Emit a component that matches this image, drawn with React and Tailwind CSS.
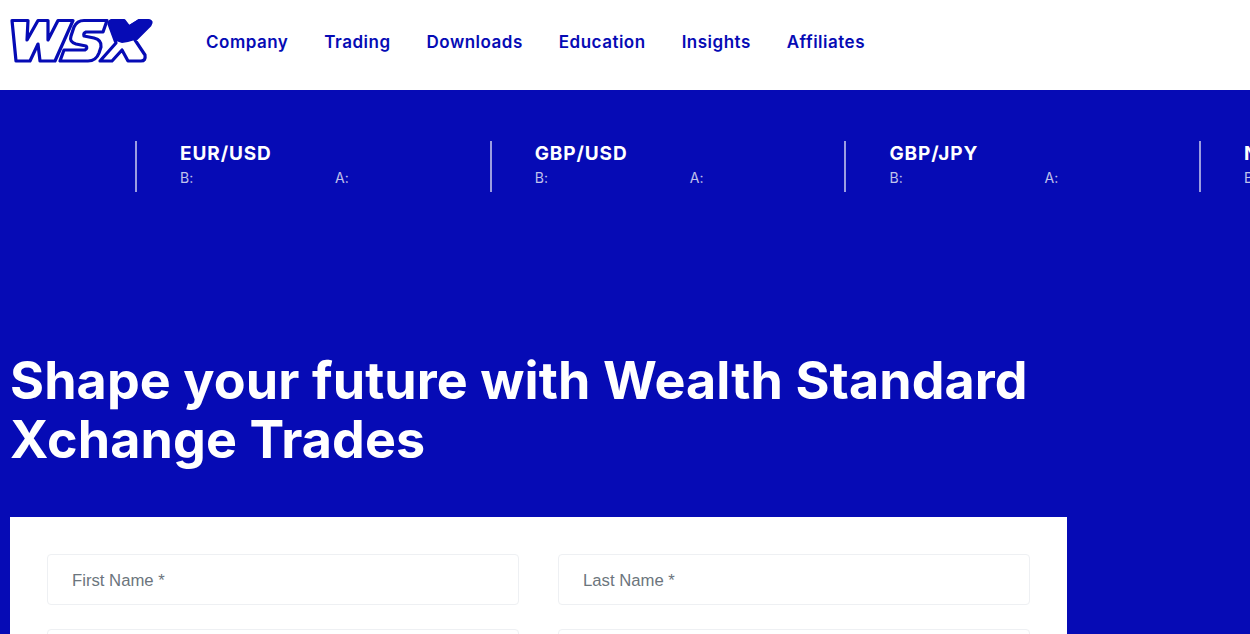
const NAV = ["Company", "Trading", "Downloads", "Education", "Insights", "Affiliates"];
const PAIRS = ["EUR/USD", "GBP/USD", "GBP/JPY", "NZD/USD"];

function Logo() {
  return (
    <svg width="146" height="48" viewBox="9 17 146 48" fill="none" className="shrink-0 -mt-[4px]">
      <g stroke="#060bb5" strokeWidth="3.2" strokeLinejoin="round" fill="#fff">
        <path d="M12 20.5 L28 20.5 L27 40 L38 20.5 L48 20.5 L48 40 L58 20.5 L73 20.5 L55 61 L40 61 L38 44 L30 61 L16 61 Z" />
        <path d="M107 20.5 L84 20.5 Q77 20.5 74 27 L71 36 Q69 42 76 44 L86 46 Q88 48 85 50 L64 50 L60 61 L88 61 Q96 61 99 53 L101 47 Q102 40 94 38 L84 36 Q83 33 86 32 L103 32 Z" />
        <path d="M112 20.5 L124 20.5 L129 27 L139 20.5 L148 20.5 Q153 21 150 25 L135 40 L145 55 Q146 61 141 61 L128 61 L122 50 L112 61 L100 61 L116 43 L109 24 Q109 21 112 20.5 Z" />
      </g>
      <path d="M112 19 L124 19 L129 25 L139 19 L148 19 Q154 20 151 25 L135 40 L128 42 L122 43 L116 41 L109 24 Q108 20 112 19 Z" fill="#060bb5" />
    </svg>
  );
}

function Quote({ pair }) {
  return (
    <div className="w-[354.7px] shrink-0 h-[51px] border-l-2 border-white/60 pl-[43px]">
      <div className="text-[19px] leading-[24px] font-bold tracking-[0.9px] text-white mt-[1px]">{pair}</div>
      <div className="flex text-[14px] leading-[18px] tracking-[0.2px] text-white/75 mt-[3px]">
        <span className="w-[155px]">B:</span>
        <span>A:</span>
      </div>
    </div>
  );
}

function Field({ label }) {
  return (
    <div className="h-[51px] border border-[#eef0f3] rounded-[4px] pl-[24px] pt-[2px] flex items-center text-[16.7px] text-[#6c757d] font-['Liberation_Sans',sans-serif]">
      {label}
    </div>
  );
}

export default function App() {
  return (
    <div className="h-[634px] overflow-hidden bg-[#060bb5] font-['Inter',sans-serif]">
      <header className="h-[90px] bg-white flex items-center pl-[9px] pb-[4px]">
        <Logo />
        <nav className="flex gap-[36px] ml-[51px] text-[17px] font-semibold tracking-[0.5px] text-[#060bb5]">
          {NAV.map((n) => (
            <span key={n}>{n}</span>
          ))}
        </nav>
      </header>

      <div className="flex overflow-hidden pl-[135px] pt-[51px]">
        {PAIRS.map((p) => (
          <Quote key={p} pair={p} />
        ))}
      </div>

      <h1 className="mt-[159px] pl-[10px] w-[1100px] text-[52px] leading-[59px] font-bold tracking-[0.1px] text-white">
        Shape your future with Wealth Standard Xchange Trades
      </h1>

      <div className="mt-[48px] ml-[10px] w-[1057px] bg-white px-[37px] pt-[37px] grid grid-cols-2 gap-x-[39px] gap-y-[24px]">
        <Field label="First Name *" />
        <Field label="Last Name *" />
        <Field label="" />
        <Field label="" />
      </div>
    </div>
  );
}
